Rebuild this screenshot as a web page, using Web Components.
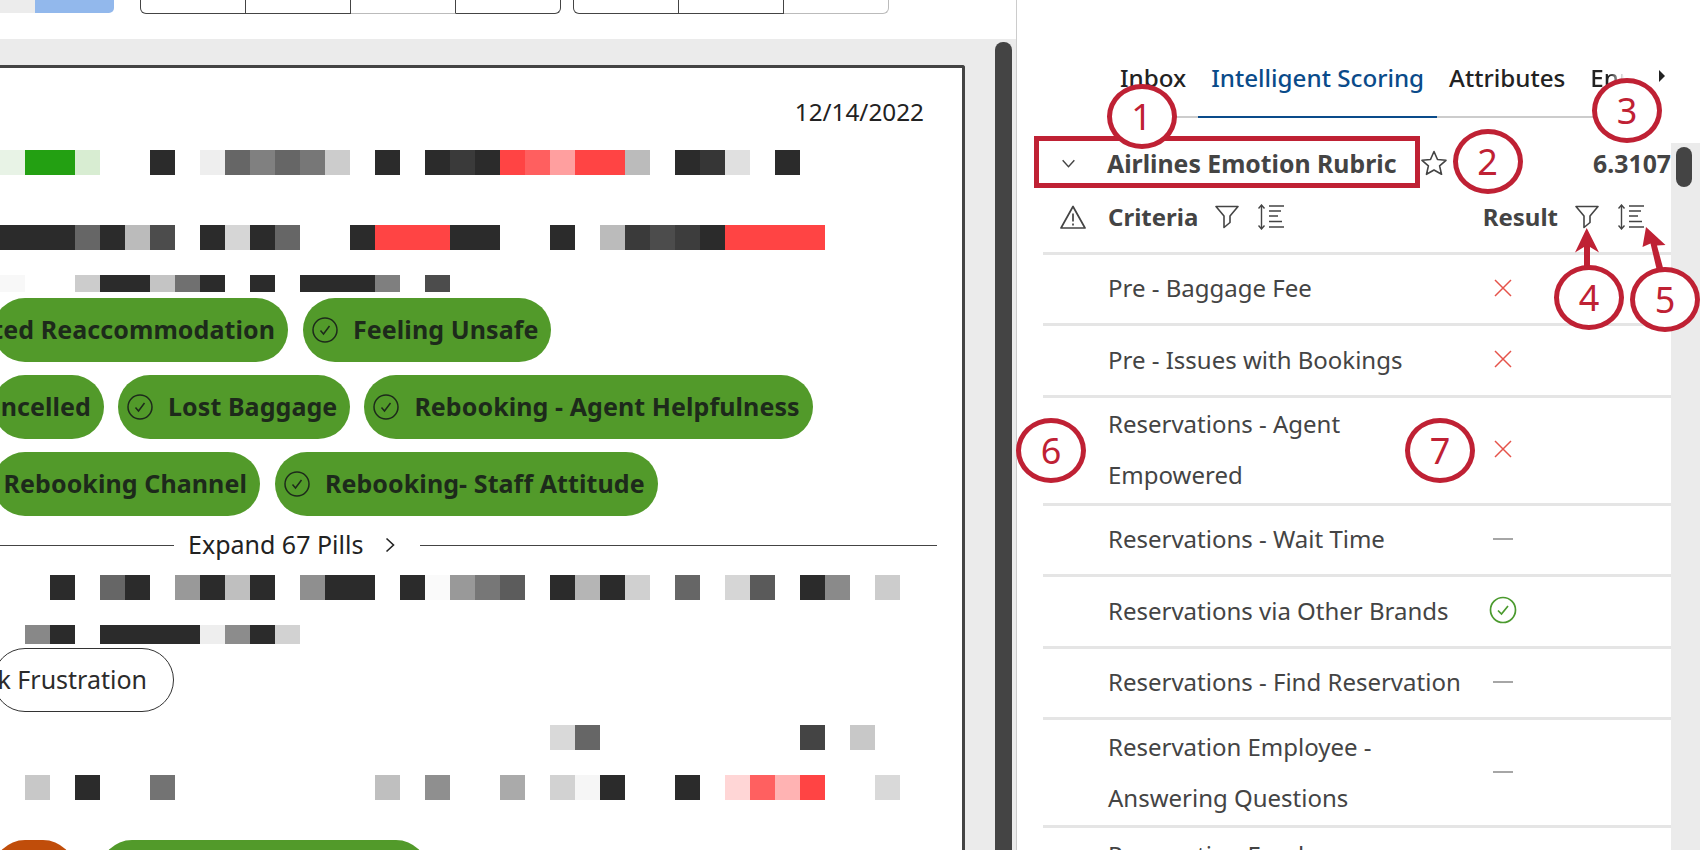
<!DOCTYPE html>
<html lang="en">
<head>
<meta charset="utf-8">
<title>Intelligent Scoring</title>
<style>
    html, body { margin: 0; height: 850px; overflow: hidden; background: #fff; }
    body { font-family: "Noto Sans", sans-serif; }
</style>
</head>
<body>
<scoring-app></scoring-app>

<script>
const UI_FONT = '"Noto Sans", sans-serif';

const ICONS = {
    check: `<svg viewBox="0 0 26 26" width="26" height="26" fill="none" stroke="currentColor" stroke-width="1.5"><circle cx="13" cy="13" r="12"/><path d="M8.5 13.5l3 3.5 6-8"/></svg>`,
    funnel: `<svg viewBox="0 0 24 24" width="24" height="24" fill="none" stroke="currentColor" stroke-width="1.6" stroke-linejoin="round"><path d="M1 1.5h22l-8 9.5v6.5l-6 5v-11.5z"/></svg>`,
    sort: `<svg viewBox="0 0 27 26" width="27" height="26" fill="none" stroke="currentColor" stroke-width="1.4"><path d="M3.5 1v24M.5 4.5l3-3.5 3 3.5M.5 21.5l3 3.5 3-3.5"/><path d="M11 2h15M11 7h12M11 12h9M11 17.5h13M11 23h15"/></svg>`,
    warn: `<svg viewBox="0 0 28 26" width="28" height="26" fill="none" stroke="currentColor" stroke-width="1.7" stroke-linejoin="round"><path d="M14 2.5L2 24h24z"/><path d="M14 9.5v8M14 19.5v2"/></svg>`,
    star: `<svg viewBox="0 0 26 26" width="26" height="26" fill="none" stroke="currentColor" stroke-width="1.6" stroke-linejoin="round"><path d="M13 1.5l3.5 8 8.5.8-6.4 5.6 1.9 8.4L13 20l-7.5 4.3 1.9-8.4L1 10.3l8.5-.8z"/></svg>`,
    chevronDown: `<svg viewBox="0 0 16 10" width="15" height="9" fill="none" stroke="currentColor" stroke-width="1.6"><path d="M1.5 1.5L8 8.5l6.5-7"/></svg>`,
    chevronRight: `<svg viewBox="0 0 10 16" width="10" height="16" fill="none" stroke="currentColor" stroke-width="1.6"><path d="M1.5 1.5L8.5 8l-7 6.5"/></svg>`,
    cross: `<svg viewBox="0 0 18 18" width="18" height="18" fill="none" stroke="#e5534b" stroke-width="1.5"><path d="M1 1l16 16M17 1L1 17"/></svg>`,
    dash: `<svg viewBox="0 0 20 4" width="20" height="4"><rect y="1" width="20" height="2" fill="#a6a6a6"/></svg>`,
    good: `<svg viewBox="0 0 28 28" width="28" height="28" fill="none" stroke="#4b9a2e" stroke-width="1.7"><circle cx="14" cy="14" r="12.5"/><path d="M9 14.5l3.5 3.5 6.5-8"/></svg>`
};

// cell lists for the blurred transcript lines: [column, colour]
const D = '#2b2b2b', R = '#ff4444';
const LINES = {
    a: [[0,'#e8f3e6'],[1,'#23a012'],[2,'#23a012'],[3,'#d8edd2'],[6,D],[8,'#eeeeee'],[9,'#666'],[10,'#808080'],[11,'#666'],[12,'#777'],[13,'#ccc'],[15,D],[17,D],[18,'#3a3a3a'],[19,D],[20,R],[21,'#ff5f5f'],[22,'#ff9f9f'],[23,R],[24,R],[25,'#bbb'],[27,D],[28,'#363636'],[29,'#e0e0e0'],[31,D]],
    b: [[0,D],[1,D],[2,D],[3,'#666'],[4,D],[5,'#bbb'],[6,'#4c4c4c'],[8,D],[9,'#d6d6d6'],[10,D],[11,'#666'],[14,D],[15,R],[16,R],[17,R],[18,D],[19,D],[22,D],[24,'#bbb'],[25,'#3a3a3a'],[26,'#4c4c4c'],[27,'#3d3d3d'],[28,D],[29,R],[30,R],[31,R],[32,R]],
    c: [[0,'#f8f8f8'],[3,'#ccc'],[4,D],[5,D],[6,'#c4c4c4'],[7,'#707070'],[8,D],[10,D],[12,D],[13,D],[14,D],[15,'#7f7f7f'],[17,'#4c4c4c']],
    d: [[2,D],[4,'#666'],[5,D],[7,'#999'],[8,D],[9,'#bfbfbf'],[10,D],[12,'#8f8f8f'],[13,D],[14,D],[16,D],[17,'#fafafa'],[18,'#999'],[19,'#777'],[20,'#5c5c5c'],[22,D],[23,'#b5b5b5'],[24,D],[25,'#d0d0d0'],[27,'#666'],[29,'#d6d6d6'],[30,'#5a5a5a'],[32,D],[33,'#8a8a8a'],[35,'#ccc']],
    e: [[1,'#888'],[2,D],[4,D],[5,D],[6,D],[7,D],[8,'#eee'],[9,'#8c8c8c'],[10,D],[11,'#d2d2d2']],
    f: [[22,'#d9d9d9'],[23,'#666'],[32,'#444'],[34,'#c8c8c8']],
    g: [[1,'#c8c8c8'],[3,D],[6,'#737373'],[15,'#bfbfbf'],[17,'#8f8f8f'],[20,'#aaa'],[22,'#d2d2d2'],[23,'#f6f6f6'],[24,D],[27,D],[29,'#ffd6d6'],[30,'#ff6060'],[31,'#ffb3b3'],[32,R],[35,'#d9d9d9']]
};

class ToolbarStrip extends HTMLElement {
    connectedCallback() {
        const shadow = this.attachShadow({ mode: 'open' });
        shadow.innerHTML = `
            <style>
                :host { display: flex; height: 39px; align-items: flex-start; background: #fff; }
                .seg { height: 13px; width: 35px; background: #ececec; }
                .on { height: 13px; width: 79px; background: #92b8ec; border-radius: 0 0 5px 0; margin-right: 26px; }
                .group { display: flex; margin-right: 12px; }
                .cell { box-sizing: border-box; width: 105px; height: 13.5px; border: 1px solid #444; border-top: 0; border-left-width: 0; }
                .cell:first-child { border-left-width: 1px; border-radius: 0 0 0 6px; width: 106px; }
                .cell:last-child { border-radius: 0 0 6px 0; }
                .cell.off { border-color: #bbb; border-right-color: #444; }
                .cell.off:last-child { border-right-color: #bbb; }
            </style>
            <div class="seg"></div><div class="on"></div>
            <div class="group"><div class="cell"></div><div class="cell"></div><div class="cell off"></div><div class="cell"></div></div>
            <div class="group"><div class="cell"></div><div class="cell"></div><div class="cell off"></div></div>`;
    }
}

class BlurLine extends HTMLElement {
    connectedCallback() {
        const shadow = this.attachShadow({ mode: 'open' });
        const cells = LINES[this.getAttribute('line')]
            .map(([col, color]) => `<i style="grid-column:${col + 1};background:${color}"></i>`).join('');
        shadow.innerHTML = `
            <style>
                :host { display: block; }
                div { display: grid; grid-template-columns: repeat(37, 25px); grid-auto-rows: var(--h, 25px); }
                i { display: block; grid-row: 1; }
            </style>
            <div>${cells}</div>`;
    }
}

class TopicPill extends HTMLElement {
    connectedCallback() {
        const shadow = this.attachShadow({ mode: 'open' });
        const icon = this.hasAttribute('cut') ? '' : `<span class="ic">${ICONS.check}</span>`;
        shadow.innerHTML = `
            <style>
                :host { display: flex; box-sizing: border-box; height: 64px; flex: none; align-items: center; justify-content: flex-end;
                        padding: 0 13px 0 9px; gap: 15px; border-radius: 32px; background: #529a2a; color: #1d2a1b;
                        font: 700 25px ${UI_FONT}; letter-spacing: .08px; white-space: nowrap; overflow: hidden; }
                :host([plain]) { background: #fff; border: 1px solid #333; color: #2b2b2b; font-weight: 400; letter-spacing: 0; padding-right: 26px; }
                :host([tone="orange"]) { background: #c04d0a; }
                .ic { display: flex; }
                .tx { display: block; margin-top: -2px; }
            </style>
            ${icon}<span class="tx"><slot></slot></span>`;
    }
}

class ExpandLine extends HTMLElement {
    connectedCallback() {
        const shadow = this.attachShadow({ mode: 'open' });
        shadow.innerHTML = `
            <style>
                :host { display: flex; align-items: center; height: 30px; font: 400 25px ${UI_FONT}; color: #222; white-space: nowrap; }
                hr { margin: 0; border: 0; height: 1px; background: #444; }
                .l { width: 181px; margin-right: 14px; flex: none; }
                .r { flex: 1; margin-left: 25px; }
                .c { display: flex; margin-left: 22px; }
                .tx { margin-top: -2px; }
            </style>
            <hr class="l"><span class="tx"><slot></slot></span><span class="c">${ICONS.chevronRight}</span><hr class="r">`;
    }
}

class TranscriptPanel extends HTMLElement {
    connectedCallback() {
        const shadow = this.attachShadow({ mode: 'open' });
        shadow.innerHTML = `
            <style>
                :host { display: block; box-sizing: border-box; width: 975px; margin-left: -10px; margin-top: 26px; height: 800px;
                        background: #fff; border: 3px solid #444; border-bottom: 0; border-radius: 3px 3px 0 0; padding-left: 7px; overflow: hidden; }
                .date { height: 30px; margin-top: 28px; display: flex; align-items: center; justify-content: flex-end; padding-right: 38px; font: 400 24.3px ${UI_FONT}; color: #222; }
                .pills { display: flex; gap: 15px; margin-top: 13px; }
                .first { margin-top: 6px; }
                .tight { gap: 14px; }
                .cut { margin-left: -7px; }
            </style>
            <div class="date">12/14/2022</div>
            <blur-line line="a" style="margin-top:24px"></blur-line>
            <blur-line line="b" style="margin-top:50px"></blur-line>
            <blur-line line="c" style="margin-top:25px;--h:17px"></blur-line>
            <div class="pills first"><topic-pill cut class="cut" style="width:295px">ted Reaccommodation</topic-pill><topic-pill>Feeling Unsafe</topic-pill></div>
            <div class="pills tight"><topic-pill cut class="cut" style="width:111px">ncelled</topic-pill><topic-pill>Lost Baggage</topic-pill><topic-pill>Rebooking - Agent Helpfulness</topic-pill></div>
            <div class="pills"><topic-pill cut class="cut" style="width:267px">Rebooking Channel</topic-pill><topic-pill>Rebooking- Staff Attitude</topic-pill></div>
            <expand-line style="margin-top:14px;margin-left:-7px;width:944px">Expand 67 Pills</expand-line>
            <blur-line line="d" style="margin-top:15px"></blur-line>
            <blur-line line="e" style="margin-top:25px;--h:19px"></blur-line>
            <div class="pills" style="margin-top:4px"><topic-pill cut plain class="cut" style="width:181px">k Frustration</topic-pill></div>
            <blur-line line="f" style="margin-top:13px"></blur-line>
            <blur-line line="g" style="margin-top:25px"></blur-line>
            <div class="pills" style="margin-top:40px;gap:25px"><topic-pill cut tone="orange" class="cut" style="width:82px"></topic-pill><topic-pill cut style="width:328px"></topic-pill></div>`;
    }
}

class ScoreTabs extends HTMLElement {
    connectedCallback() {
        const shadow = this.attachShadow({ mode: 'open' });
        shadow.innerHTML = `
            <style>
                :host { display: block; position: relative; height: 126px; box-sizing: border-box; font: 500 24.2px ${UI_FONT}; color: #222; }
                .strip { position: absolute; left: 103px; top: 58px; display: flex; gap: 25px; white-space: nowrap; }
                .t { height: 40px; line-height: 40px; }
                .a { color: #0a4b8a; }
                .line { position: absolute; left: 159px; width: 450px; top: 116px; height: 2px; background: #ccc; }
                .bar { position: absolute; left: 181px; width: 239px; top: 115.5px; height: 2.5px; background: #0a4b8a; }
                .fade { -webkit-mask-image: linear-gradient(90deg, #000 55%, transparent 95%); mask-image: linear-gradient(90deg, #000 55%, transparent 95%); width: 36px; overflow: hidden; }
                .more { position: absolute; left: 642px; top: 70px; width: 0; height: 0; border-left: 6px solid #222; border-top: 6px solid transparent; border-bottom: 6px solid transparent; }
            </style>
            <div class="strip">
                <span class="t">Inbox</span>
                <span class="t a">Intelligent Scoring</span>
                <span class="t">Attributes</span>
                <span class="t fade">Enr</span>
            </div>
            <div class="line"></div>
            <div class="bar"></div>
            <div class="more"></div>`;
    }
}

class RubricHead extends HTMLElement {
    connectedCallback() {
        const shadow = this.attachShadow({ mode: 'open' });
        shadow.innerHTML = `
            <style>
                :host { display: flex; align-items: center; height: 40px; color: #444; font: 700 24.8px ${UI_FONT}; white-space: nowrap; }
                .chev { display: flex; box-sizing: border-box; width: 90px; padding-left: 44px; }
                .star { display: flex; margin-left: 25px; }
                .score { margin-left: auto; }
            </style>
            <span class="chev">${ICONS.chevronDown}</span>
            <span class="title">Airlines Emotion Rubric</span>
            <span class="star">${ICONS.star}</span>
            <span class="score">6.3107</span>`;
    }
}

class CriteriaHead extends HTMLElement {
    connectedCallback() {
        const shadow = this.attachShadow({ mode: 'open' });
        shadow.innerHTML = `
            <style>
                :host { display: flex; align-items: center; height: 71.5px; box-sizing: border-box; border-bottom: 3px solid #e5e5e5; color: #444; font: 700 24px ${UI_FONT}; margin-left: 26px; }
                span { display: flex; }
                .warn { box-sizing: border-box; width: 65px; padding-left: 16px; }
                .tx { margin-top: -2px; }
                .g1 { margin-left: 17px; }
                .g2 { margin-left: 19px; }
                .res { margin-left: auto; }
                .tail { margin-right: 26px; }
            </style>
            <span class="warn">${ICONS.warn}</span>
            <span class="tx">Criteria</span>
            <span class="g1">${ICONS.funnel}</span>
            <span class="g2">${ICONS.sort}</span>
            <span class="res tx">Result</span>
            <span class="g1">${ICONS.funnel}</span>
            <span class="g2 tail">${ICONS.sort}</span>`;
    }
}

class CriteriaRow extends HTMLElement {
    connectedCallback() {
        const shadow = this.attachShadow({ mode: 'open' });
        const icon = ICONS[this.getAttribute('result')] || '';
        shadow.innerHTML = `
            <style>
                :host { display: flex; align-items: center; box-sizing: border-box; min-height: 71.5px; padding: .5px 0 2.5px; border-bottom: 3px solid #e5e5e5;
                        margin-left: 26px; color: #444; font: 400 24px/51px ${UI_FONT}; }
                .txt { width: 365px; margin-left: 65px; flex: none; white-space: nowrap; }
                .res { display: flex; width: 50px; justify-content: center; margin-left: 5px; }
            </style>
            <div class="txt"><slot></slot></div>
            <div class="res">${icon}</div>`;
    }
}

class ScoringPanel extends HTMLElement {
    connectedCallback() {
        const shadow = this.attachShadow({ mode: 'open' });
        shadow.innerHTML = `
            <style>
                :host { display: flex; flex-direction: column; height: 850px; background: #fff; border-left: 1px solid #ccc; box-sizing: border-box; overflow: hidden; }
                .body { flex: 1; display: flex; min-height: 0; margin-top: 17px; }
                .main { flex: 1; min-width: 0; overflow: hidden; }
                .track { width: 29px; flex: none; background: #ebebeb; position: relative; }
                .thumb { margin: 4px 0 0 5px; width: 16px; height: 40px; border-radius: 8px; background: #444; }
            </style>
            <score-tabs></score-tabs>
            <div class="body">
                <div class="main">
                    <rubric-head></rubric-head>
                    <criteria-head></criteria-head>
                    <criteria-row result="cross">Pre - Baggage Fee</criteria-row>
                    <criteria-row result="cross">Pre - Issues with Bookings</criteria-row>
                    <criteria-row result="cross">Reservations - Agent<br>Empowered</criteria-row>
                    <criteria-row result="dash">Reservations - Wait Time</criteria-row>
                    <criteria-row result="good">Reservations via Other Brands</criteria-row>
                    <criteria-row result="dash">Reservations - Find Reservation</criteria-row>
                    <criteria-row result="dash">Reservation Employee -<br>Answering Questions</criteria-row>
                    <criteria-row>Reservation Employee<br>&nbsp;</criteria-row>
                </div>
                <div class="track"><div class="thumb"></div></div>
            </div>`;
    }
}

class NoteMark extends HTMLElement {
    connectedCallback() {
        const shadow = this.attachShadow({ mode: 'open' });
        shadow.innerHTML = `
            <style>
                :host { position: absolute; box-sizing: border-box; width: 70px; height: 65px; margin: -32.5px 0 0 -35px; border: 5px solid #bf2134; border-radius: 50%;
                        background: #fff; color: #bf2134; display: flex; align-items: center; justify-content: center; font: 400 36px "Noto Sans", sans-serif; }
            </style>
            <slot></slot>`;
    }
}

class NoteLayer extends HTMLElement {
    connectedCallback() {
        const shadow = this.attachShadow({ mode: 'open' });
        const marks = [[1141.5,116],[1487.5,161],[1627,110],[1589,297],[1665,299],[1051,450],[1440,450]]
            .map(([x, y], i) => `<note-mark style="left:${x}px;top:${y}px">${i + 1}</note-mark>`).join('');
        shadow.innerHTML = `
            <style>
                :host { position: absolute; inset: 0; display: block; pointer-events: none; }
                .box { position: absolute; box-sizing: border-box; left: 1034px; top: 136px; width: 386px; height: 52px; border: 5px solid #bf2134; }
                svg { position: absolute; inset: 0; }
            </style>
            <svg width="1700" height="850" fill="#bf2134">
                <path d="M1584 272V247l-9 5.5L1586.7 228l12.3 24.5-9-5.5v25z"/>
                <path d="M1657 271l-6.5-27.5-8 3.5 3.5-20 19.5 18-8.5 .5 6.5 24z"/>
            </svg>
            <div class="box"></div>
            ${marks}`;
    }
}

class ScoringApp extends HTMLElement {
    connectedCallback() {
        const shadow = this.attachShadow({ mode: 'open' });
        shadow.innerHTML = `
            <style>
                :host { display: grid; grid-template-columns: 1016px 684px; height: 850px; position: relative; overflow: hidden; font-family: ${UI_FONT}; }
                .left { display: flex; flex-direction: column; min-width: 0; overflow: hidden; }
                .work { flex: 1; min-height: 0; display: flex; background: #ebebeb; justify-content: space-between; padding-right: 4px; }
                .bar { width: 17px; margin-top: 3px; border-radius: 8px 8px 0 0; background: #444; }
            </style>
            <div class="left">
                <toolbar-strip></toolbar-strip>
                <div class="work">
                    <transcript-panel></transcript-panel>
                    <div class="bar"></div>
                </div>
            </div>
            <scoring-panel></scoring-panel>
            <note-layer></note-layer>`;
    }
}

customElements.define('toolbar-strip', ToolbarStrip);
customElements.define('blur-line', BlurLine);
customElements.define('topic-pill', TopicPill);
customElements.define('expand-line', ExpandLine);
customElements.define('transcript-panel', TranscriptPanel);
customElements.define('score-tabs', ScoreTabs);
customElements.define('rubric-head', RubricHead);
customElements.define('criteria-head', CriteriaHead);
customElements.define('criteria-row', CriteriaRow);
customElements.define('scoring-panel', ScoringPanel);
customElements.define('note-mark', NoteMark);
customElements.define('note-layer', NoteLayer);
customElements.define('scoring-app', ScoringApp);
</script>
</body>
</html>
